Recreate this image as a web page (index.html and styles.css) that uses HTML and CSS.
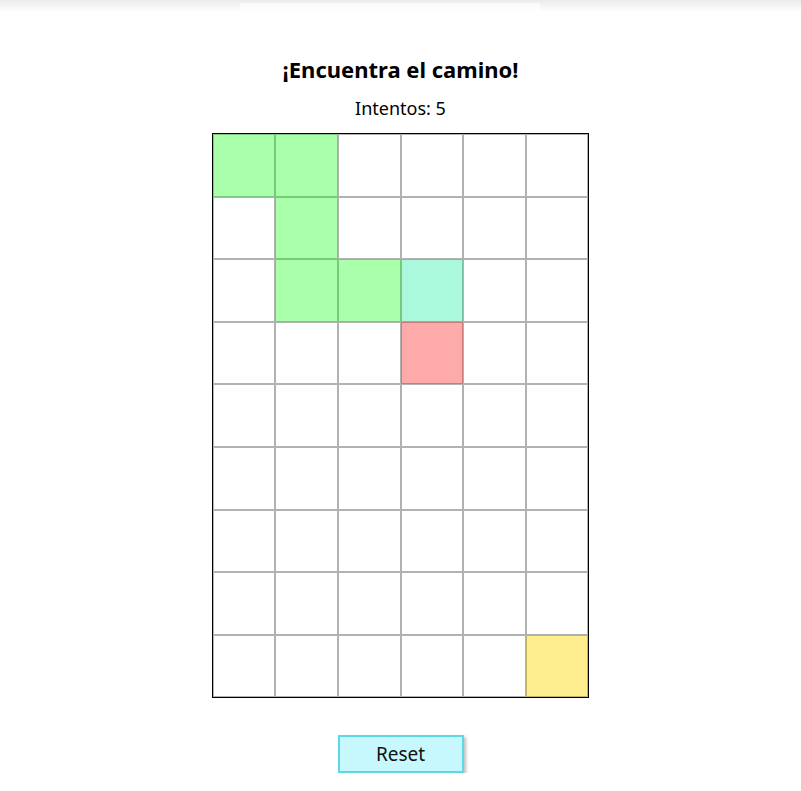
FILE: index.html
```html
<!DOCTYPE html>
<html lang="es">
<head>
<meta charset="utf-8">
<title>¡Encuentra el camino!</title>
<link rel="stylesheet" href="styles.css">
</head>
<body>
<div class="topbar"><div class="topbar-tab"></div></div>
<main class="game">
  <h1 class="title">¡Encuentra el camino!</h1>
  <p class="tries">Intentos: 5</p>
  <div class="board">
    <div class="cell path"></div><div class="cell path"></div><div class="cell"></div><div class="cell"></div><div class="cell"></div><div class="cell"></div>
    <div class="cell"></div><div class="cell path"></div><div class="cell"></div><div class="cell"></div><div class="cell"></div><div class="cell"></div>
    <div class="cell"></div><div class="cell path"></div><div class="cell path"></div><div class="cell current"></div><div class="cell"></div><div class="cell"></div>
    <div class="cell"></div><div class="cell"></div><div class="cell"></div><div class="cell wrong"></div><div class="cell"></div><div class="cell"></div>
    <div class="cell"></div><div class="cell"></div><div class="cell"></div><div class="cell"></div><div class="cell"></div><div class="cell"></div>
    <div class="cell"></div><div class="cell"></div><div class="cell"></div><div class="cell"></div><div class="cell"></div><div class="cell"></div>
    <div class="cell"></div><div class="cell"></div><div class="cell"></div><div class="cell"></div><div class="cell"></div><div class="cell"></div>
    <div class="cell"></div><div class="cell"></div><div class="cell"></div><div class="cell"></div><div class="cell"></div><div class="cell"></div>
    <div class="cell"></div><div class="cell"></div><div class="cell"></div><div class="cell"></div><div class="cell"></div><div class="cell goal"></div>
  </div>
  <button class="reset" type="button">Reset</button>
</main>
</body>
</html>
```

FILE: styles.css
```css
html, body {
  margin: 0;
  padding: 0;
  background: #ffffff;
}

body {
  font-family: "Noto Sans", "Open Sans", sans-serif;
  color: #000;
}

.topbar {
  height: 12px;
  background: linear-gradient(#ebebeb, #ffffff);
  display: flex;
  justify-content: flex-start;
}

.topbar-tab {
  margin-left: 240px;
  margin-top: 3px;
  width: 300px;
  height: 9px;
  background: linear-gradient(#fafafa, #ffffff);
}

.game {
  display: flex;
  flex-direction: column;
  align-items: center;
  padding-top: 43px;
}

.title {
  margin: 0;
  font-size: 22px;
  line-height: 29px;
  font-weight: 700;
}

.tries {
  margin: 12px 0 0;
  font-size: 18px;
  line-height: 24px;
}

.board {
  margin-top: 13px;
  border: 1px solid #000;
  display: grid;
  grid-template-columns: repeat(6, 62.67px);
  grid-template-rows: repeat(9, 62.6px);
}

.cell {
  box-sizing: border-box;
  border: 1px solid rgba(0, 0, 0, 0.3);
  background: #ffffff;
}

.cell.path { background: #aaffaa; border-color: rgba(0, 60, 0, 0.28); }
.cell.current { background: #aaf9dd; border-color: rgba(0, 40, 20, 0.28); }
.cell.wrong { background: #ffaaaa; border-color: rgba(60, 0, 0, 0.28); }
.cell.goal { background: #ffee90; border-color: rgba(40, 30, 0, 0.28); }

.reset {
  margin-top: 37px;
  width: 126px;
  height: 38px;
  font-family: inherit;
  font-size: 19px;
  color: #111;
  background: #c6f8fd;
  border: 2px solid #5cd8e6;
  box-shadow: 2px 2px 3px rgba(0, 0, 0, 0.25);
  cursor: pointer;
}
```
